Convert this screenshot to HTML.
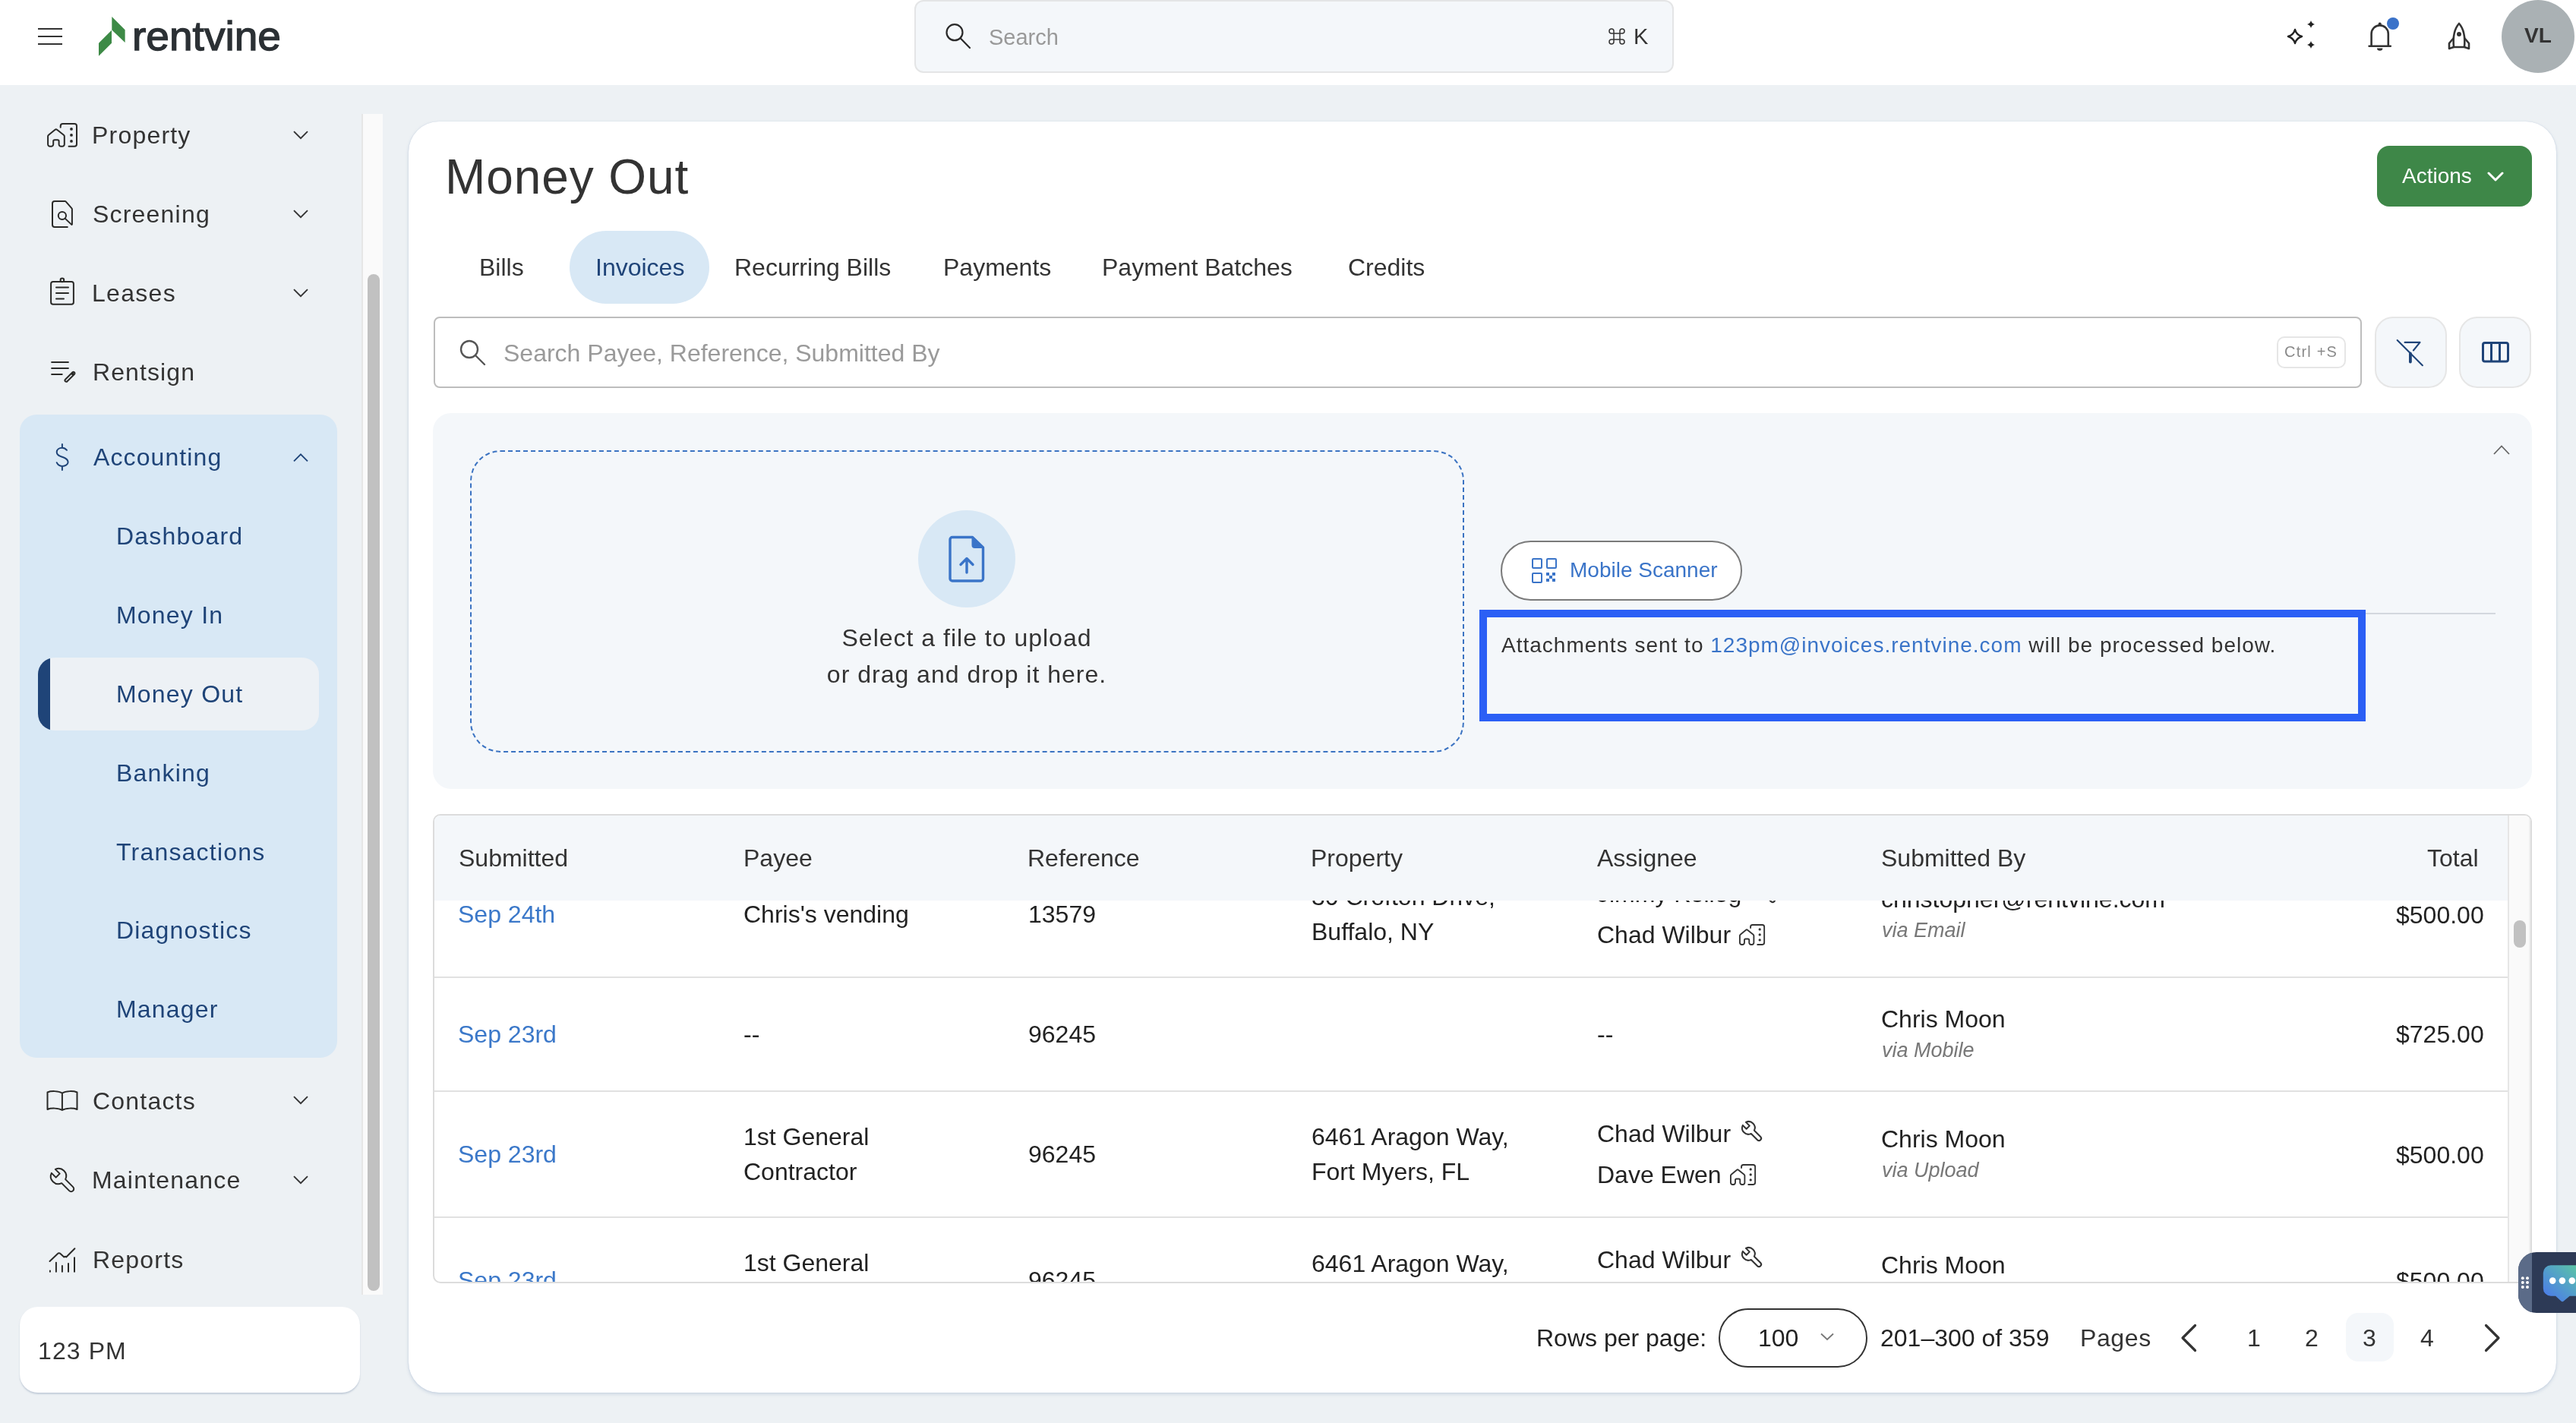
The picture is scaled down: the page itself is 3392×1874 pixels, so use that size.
<!DOCTYPE html>
<html><head><meta charset="utf-8">
<style>
*{box-sizing:border-box;margin:0;padding:0}
html,body{width:3392px;height:1874px;overflow:hidden}
body{position:relative;background:#edf1f4;font-family:"Liberation Sans",sans-serif;color:#333}
.t,svg{will-change:transform}
.a{position:absolute}
.t{position:absolute;white-space:nowrap;font-size:32px;line-height:32px}
svg{position:absolute;overflow:visible}
</style></head><body>
<!-- HEADER -->
<div class="a" style="left:0px;top:0px;width:3392px;height:112px;background:#fff"></div>
<div class="a" style="left:50px;top:37px;width:32px;height:2px;background:#333"></div>
<div class="a" style="left:50px;top:47px;width:32px;height:2px;background:#333"></div>
<div class="a" style="left:50px;top:57px;width:32px;height:2px;background:#333"></div>
<svg style="left:130px;top:22px" width="36" height="52" viewBox="0 0 36 52"><path d="M17.3 0 L34.6 17.2 L34.6 34 L17.3 17.4 Z" fill="#3d8a46"/><path d="M17 17.8 L17 34.7 L0 51.8 L0 34.7 Z" fill="#3d8a46"/></svg>
<svg style="left:177px;top:20px" width="192" height="50"><text x="-3" y="45.6" font-family="Liberation Sans" font-weight="400" font-size="53" fill="#2b3034" stroke="#2b3034" stroke-width="1.3" textLength="196" lengthAdjust="spacingAndGlyphs">rentvine</text></svg>
<div class="a" style="left:1204px;top:0px;width:1000px;height:96px;background:#f4f7fa;border:2px solid #e4e5e6;border-radius:12px"></div>
<svg style="left:1244px;top:30px" width="36" height="36" viewBox="0 0 36 36"><circle cx="13" cy="12.7" r="10.5" fill="none" stroke="#2a2a2a" stroke-width="2.2"/><path d="M20.6 20.3 L33 33" stroke="#2a2a2a" stroke-width="2.2" stroke-linecap="round"/></svg>
<div class="t" style="left:1302px;top:35.4px;font-size:29px;line-height:29px;color:#999">Search</div>
<svg style="left:2117px;top:36px" width="24" height="24" viewBox="0 0 24 24"><path d="M8 8 H16 V16 H8 Z M8 8 V5 A3 3 0 1 0 5 8 H8 M16 8 V5 A3 3 0 1 1 19 8 H16 M16 16 V19 A3 3 0 1 0 19 16 H16 M8 16 V19 A3 3 0 1 1 5 16 H8" fill="none" stroke="#333" stroke-width="1.5"/></svg>
<div class="t" style="left:2150.5px;top:33.9px;font-size:29px;line-height:29px;color:#333">K</div>
<svg style="left:3013px;top:27px" width="38" height="38" viewBox="0 0 38 38"><path d="M9 12 Q11 19 18 21 Q11 23 9 30 Q7 23 0 21 Q7 19 9 12 Z" fill="none" stroke="#222" stroke-width="2.5" stroke-linejoin="round"/><path d="M30 0 Q31 4 35 5 Q31 6 30 10 Q29 6 25 5 Q29 4 30 0 Z" fill="#222"/><path d="M30 27 Q31 31 35 32 Q31 33 30 37 Q29 33 25 32 Q29 31 30 27 Z" fill="#222"/></svg>
<svg style="left:3118px;top:29px" width="34" height="40" viewBox="0 0 34 40"><path d="M4.6 31.7 V15.5 A11.1 11.1 0 0 1 26.8 15.5 V31.7" fill="none" stroke="#333" stroke-width="2.6"/><path d="M1.6 31.7 H29.8" stroke="#333" stroke-width="2.6" stroke-linecap="round"/><circle cx="15.7" cy="2.6" r="2" fill="#333"/><path d="M12 34.5 A3.7 3.3 0 0 0 19.4 34.5 Z" fill="#333"/></svg>
<div class="a" style="left:3143px;top:23px;width:16px;height:16px;border-radius:50%;background:#3a72c9"></div>
<svg style="left:3223px;top:29px" width="30" height="38" viewBox="0 0 30 38"><path d="M15 2 Q6 12 8 33 H22 Q24 12 15 2 Z" fill="none" stroke="#333" stroke-width="2.6" stroke-linejoin="round"/><circle cx="15" cy="16" r="3" fill="#333"/><path d="M8 21 L2 28 V35 L8 33" fill="none" stroke="#333" stroke-width="2.6" stroke-linejoin="round"/><path d="M22 21 L28 28 V35 L22 33" fill="none" stroke="#333" stroke-width="2.6" stroke-linejoin="round"/></svg>
<div class="a" style="left:3294px;top:0px;width:96px;height:96px;border-radius:50%;background:#aab1b4"></div>
<div class="t" style="left:3324px;top:33.3px;font-size:28px;line-height:28px;color:#333;font-weight:700">VL</div>
<!-- SIDEBAR -->
<div class="a" style="left:476px;top:150px;width:28px;height:1555px;background:#fafafa;border-left:2px solid #e6e6e6"></div>
<div class="a" style="left:484px;top:361px;width:16px;height:1339px;background:#c1c1c1;border-radius:8px"></div>
<svg style="left:50px;top:150px" width="70" height="60" viewBox="0 0 70 60"><path d="M29.7 17.7 V16.1 A3 3 0 0 1 32.7 13.1 H48 A3 3 0 0 1 51 16.1 V39.8 A3 3 0 0 1 48 42.8 H40.5" fill="none" stroke="#2a2a28" stroke-width="2" stroke-linecap="round" stroke-linejoin="round"/><path d="M13.1 29.5 A2 2 0 0 1 14 27.8 L22.6 20.8 A2 2 0 0 1 25 20.8 L33.9 27.8 A2 2 0 0 1 34.8 29.5 V40 A2.8 2.8 0 0 1 32 42.8 H30.4 A2.8 2.8 0 0 1 27.6 40 V36 A1.8 1.8 0 0 0 25.8 34.2 H22 A1.8 1.8 0 0 0 20.2 36 V40 A2.8 2.8 0 0 1 17.4 42.8 H15.9 A2.8 2.8 0 0 1 13.1 40 Z" fill="none" stroke="#2a2a28" stroke-width="2" stroke-linecap="round" stroke-linejoin="round"/><circle cx="44" cy="19.9" r="1.9" fill="#2a2a28"/><circle cx="44" cy="27.9" r="1.9" fill="#2a2a28"/><circle cx="44" cy="35.9" r="1.9" fill="#2a2a28"/></svg>
<div class="t" style="left:121px;top:162.4px;font-size:32px;line-height:32px;letter-spacing:1.2px">Property</div>
<svg style="left:385px;top:172px" width="22" height="14" viewBox="0 0 22 14"><path d="M2 1.2 L11 10.2 L20 1.2" fill="none" stroke="#333" stroke-width="1.9"/></svg>
<svg style="left:50px;top:255px" width="70" height="60" viewBox="0 0 70 60"><path d="M38.8 43.9 H22 A3 3 0 0 1 19 40.9 V12.9 A3 3 0 0 1 22 9.9 H35.5 A1.5 1.5 0 0 1 36.6 10.4 L44.5 19.4 A1.5 1.5 0 0 1 44.9 20.4 V40.5" fill="none" stroke="#2a2a28" stroke-width="2" stroke-linecap="round" stroke-linejoin="round"/><circle cx="31.9" cy="29" r="5.1" fill="none" stroke="#2a2a28" stroke-width="2" stroke-linecap="round" stroke-linejoin="round"/><path d="M35.6 32.6 L44.3 40.9" fill="none" stroke="#2a2a28" stroke-width="2" stroke-linecap="round" stroke-linejoin="round"/></svg>
<div class="t" style="left:121.5px;top:265.9px;font-size:32px;line-height:32px;letter-spacing:1.2px">Screening</div>
<svg style="left:385px;top:276px" width="22" height="14" viewBox="0 0 22 14"><path d="M2 1.2 L11 10.2 L20 1.2" fill="none" stroke="#333" stroke-width="1.9"/></svg>
<svg style="left:50px;top:355px" width="70" height="60" viewBox="0 0 70 60"><rect x="17.1" y="16" width="29.8" height="29.8" rx="2.8" fill="none" stroke="#2a2a28" stroke-width="2" stroke-linecap="round" stroke-linejoin="round"/><circle cx="31.9" cy="13.9" r="2.3" fill="none" stroke="#2a2a28" stroke-width="2" stroke-linecap="round" stroke-linejoin="round"/><path d="M24 23.4 H40 M24 31 H40 M24 38.5 H34" fill="none" stroke="#2a2a28" stroke-width="2" stroke-linecap="round" stroke-linejoin="round"/></svg>
<div class="t" style="left:121px;top:369.9px;font-size:32px;line-height:32px;letter-spacing:1.3px">Leases</div>
<svg style="left:385px;top:380px" width="22" height="14" viewBox="0 0 22 14"><path d="M2 1.2 L11 10.2 L20 1.2" fill="none" stroke="#333" stroke-width="1.9"/></svg>
<svg style="left:50px;top:460px" width="70" height="60" viewBox="0 0 70 60"><path d="M18.1 17 H39.9 M18.1 25 H39.9 M18.1 33 H31.7" fill="none" stroke="#2a2a28" stroke-width="2" stroke-linecap="round" stroke-linejoin="round"/><path d="M36.2 39.5 L45.5 30.2 A1.6 1.6 0 0 1 47.8 30.2 L48 30.4 A1.6 1.6 0 0 1 48 32.7 L38.7 42 A2 2 0 0 1 36 42.3 A2 2 0 0 1 36.2 39.5 Z" fill="none" stroke="#2a2a28" stroke-width="2" stroke-linecap="round" stroke-linejoin="round"/><path d="M44.5 31.2 L47 33.7" stroke="#2a2a28" stroke-width="3.5"/></svg>
<div class="t" style="left:121.5px;top:473.6px;font-size:32px;line-height:32px;letter-spacing:1.1px">Rentsign</div>
<div class="a" style="left:26px;top:546px;width:418px;height:847px;background:#d8e8f5;border-radius:22px"></div>
<svg style="left:50px;top:570px" width="70" height="60" viewBox="0 0 70 60"><path d="M38 22.8 C36 20.5 33.5 19.8 31.9 19.8 C28 19.8 24.7 22 24.7 25.5 C24.7 29.5 28.5 30.5 32 31.8 C36 33.2 39.6 34.8 39.6 38.5 C39.6 41.8 36 43.9 31.9 43.9 C28.5 43.9 26 42 24.7 39.2 M31.9 15 V19.8 M31.9 43.9 V48.9" fill="none" stroke="#1f4478" stroke-width="2" stroke-linecap="round" stroke-linejoin="round"/></svg>
<div class="t" style="left:122.5px;top:586.2px;font-size:32px;line-height:32px;color:#1f4478;letter-spacing:1.1px">Accounting</div>
<svg style="left:385px;top:595px" width="22" height="14" viewBox="0 0 22 14"><path d="M2 12.3 L11 3.3 L20 12.3" fill="none" stroke="#1f4478" stroke-width="1.9"/></svg>
<div class="a" style="left:50px;top:866px;width:370px;height:96px;background:#edf1f5;border-radius:22px;overflow:hidden"><div class="a" style="left:0;top:0;width:16px;height:96px;background:#1f4478"></div></div>
<div class="t" style="left:153px;top:690.3px;font-size:32px;line-height:32px;color:#1f4478;letter-spacing:1.2px">Dashboard</div>
<div class="t" style="left:153px;top:794.1px;font-size:32px;line-height:32px;color:#1f4478;letter-spacing:1.2px">Money In</div>
<div class="t" style="left:153px;top:897.9px;font-size:32px;line-height:32px;color:#1f4478;letter-spacing:1.2px">Money Out</div>
<div class="t" style="left:153px;top:1001.7px;font-size:32px;line-height:32px;color:#1f4478;letter-spacing:1.2px">Banking</div>
<div class="t" style="left:153px;top:1105.5px;font-size:32px;line-height:32px;color:#1f4478;letter-spacing:1.2px">Transactions</div>
<div class="t" style="left:153px;top:1209.3px;font-size:32px;line-height:32px;color:#1f4478;letter-spacing:1.2px">Diagnostics</div>
<div class="t" style="left:153px;top:1313.1px;font-size:32px;line-height:32px;color:#1f4478;letter-spacing:1.2px">Manager</div>
<svg style="left:50px;top:1420px" width="70" height="60" viewBox="0 0 70 60"><path d="M31.9 19.5 C27 16.5 17 16.5 12.5 18.5 V41 C17 39 27 39 31.9 42 C36.8 39 46.8 39 51.5 41 V18.5 C46.8 16.5 36.8 16.5 31.9 19.5 Z M31.9 19.5 V42" fill="none" stroke="#2a2a28" stroke-width="2" stroke-linecap="round" stroke-linejoin="round"/></svg>
<div class="t" style="left:121.5px;top:1433.6px;font-size:32px;line-height:32px;letter-spacing:1.2px">Contacts</div>
<svg style="left:385px;top:1443px" width="22" height="14" viewBox="0 0 22 14"><path d="M2 1.2 L11 10.2 L20 1.2" fill="none" stroke="#333" stroke-width="1.9"/></svg>
<svg style="left:62px;top:1534px" width="40" height="40" viewBox="0 0 24 24"><path d="M7 10 L10 7 L6.5 3.5 a6 6 0 0 1 8 8 l6 6 a2 2 0 0 1 -3 3 l-6 -6 a6 6 0 0 1 -8 -8 Z" fill="none" stroke="#2a2a28" stroke-width="1.2" stroke-linecap="round" stroke-linejoin="round"/></svg>
<div class="t" style="left:121px;top:1538.1px;font-size:32px;line-height:32px;letter-spacing:1.2px">Maintenance</div>
<svg style="left:385px;top:1548px" width="22" height="14" viewBox="0 0 22 14"><path d="M2 1.2 L11 10.2 L20 1.2" fill="none" stroke="#333" stroke-width="1.9"/></svg>
<svg style="left:50px;top:1520px" width="70" height="170" viewBox="0 0 70 170"><path d="M15.5 141 L26.3 130.8 A2 2 0 0 1 29.2 130.8 L34.4 135.5 A2 2 0 0 1 37.2 135.5 L48.4 124.3" fill="none" stroke="#2a2a28" stroke-width="2" stroke-linecap="round" stroke-linejoin="round"/><path d="M15.9 153.5 V154.7 M23.9 142.8 V154.7 M31.9 147 V154.7 M40 144 V154.7 M48 136.2 V154.7" fill="none" stroke="#2a2a28" stroke-width="2" stroke-linecap="round" stroke-linejoin="round"/></svg>
<div class="t" style="left:121.5px;top:1642.9px;font-size:32px;line-height:32px;letter-spacing:1.2px">Reports</div>
<div class="a" style="left:26px;top:1721px;width:448px;height:113px;background:#fff;border-radius:24px;box-shadow:0 2px 2px rgba(120,140,170,0.35)"></div>
<div class="t" style="left:50px;top:1762.9px;font-size:32px;line-height:32px;letter-spacing:1.1px">123 PM</div>
<!-- MAIN CARD -->
<div class="a" style="left:538px;top:160px;width:2828px;height:1674px;background:#fff;border-radius:40px;box-shadow:0 2px 4px rgba(110,140,180,0.28), 0 0 1px rgba(150,170,200,0.5)"></div>
<div class="t" style="left:586px;top:200.8px;font-size:64px;line-height:64px;color:#333;letter-spacing:0.9px">Money Out</div>
<div class="a" style="left:3130px;top:192px;width:204px;height:80px;background:#3e8748;border-radius:16px"></div>
<div class="t" style="left:3163px;top:218.3px;font-size:28px;line-height:28px;color:#fff">Actions</div>
<svg style="left:3275px;top:226px" width="22" height="14" viewBox="0 0 22 14"><path d="M2 2 L11 11 L20 2" fill="none" stroke="#fff" stroke-width="3" stroke-linecap="round" stroke-linejoin="round"/></svg>
<div class="a" style="left:750px;top:304px;width:184px;height:96px;background:#d8e8f5;border-radius:48px"></div>
<div class="t" style="left:631px;top:336.4px;font-size:32px;line-height:32px">Bills</div>
<div class="t" style="left:784px;top:336.4px;font-size:32px;line-height:32px;color:#1f4478">Invoices</div>
<div class="t" style="left:967px;top:336.4px;font-size:32px;line-height:32px">Recurring Bills</div>
<div class="t" style="left:1242px;top:336.4px;font-size:32px;line-height:32px">Payments</div>
<div class="t" style="left:1451px;top:336.4px;font-size:32px;line-height:32px">Payment Batches</div>
<div class="t" style="left:1775px;top:336.4px;font-size:32px;line-height:32px">Credits</div>
<div class="a" style="left:571px;top:417px;width:2539px;height:94px;border:2px solid #bdbdbd;border-radius:8px;background:#fff"></div>
<svg style="left:604px;top:446px" width="36" height="36" viewBox="0 0 36 36"><circle cx="14" cy="14" r="11" fill="none" stroke="#555" stroke-width="2.4"/><path d="M22 22 L34 34" stroke="#555" stroke-width="2.4" stroke-linecap="round"/></svg>
<div class="t" style="left:663px;top:448.9px;font-size:32px;line-height:32px;color:#9a9a9a">Search Payee, Reference, Submitted By</div>
<div class="a" style="left:2998px;top:443px;width:91px;height:42px;border:2px solid #e6e6e6;border-radius:10px;background:#fff"></div>
<div class="t" style="left:3008px;top:453.1px;font-size:20px;line-height:20px;color:#8a8a8a;letter-spacing:1.2px">Ctrl +S</div>
<div class="a" style="left:3127px;top:417px;width:95px;height:94px;background:#f4f7fa;border:2px solid #e6e6e6;border-radius:24px"></div>
<div class="a" style="left:3238px;top:417px;width:95px;height:94px;background:#f4f7fa;border:2px solid #e6e6e6;border-radius:24px"></div>
<svg style="left:3140px;top:430px" width="70" height="70" viewBox="0 0 70 70"><path d="M16.7 18 L49.9 51.2" stroke="#1f4478" stroke-width="2.1" stroke-linecap="round"/><path d="M26.6 20.9 H46.5 L37.9 31.5" fill="none" stroke="#1f4478" stroke-width="2.1" stroke-linecap="round" stroke-linejoin="round"/><path d="M33.9 35.5 V46.5" stroke="#1f4478" stroke-width="3.8" stroke-linecap="round"/></svg>
<svg style="left:3266px;top:448px" width="40" height="34" viewBox="0 0 40 34"><rect x="3.5" y="3.5" width="33" height="24.5" rx="2.5" fill="none" stroke="#1f4478" stroke-width="3"/><path d="M14.5 3.5 V28 M25.5 3.5 V28" stroke="#1f4478" stroke-width="3"/></svg>
<!-- UPLOAD -->
<div class="a" style="left:570px;top:544px;width:2764px;height:495px;background:#f4f7fa;border-radius:24px"></div>
<div class="a" style="left:619px;top:593px;width:1309px;height:398px;border:2px dashed #3b73c2;border-radius:40px"></div>
<div class="a" style="left:1209px;top:672px;width:128px;height:128px;border-radius:50%;background:#d8e8f5"></div>
<svg style="left:1248px;top:704px" width="50" height="64" viewBox="0 0 50 64"><path d="M6 3.5 H32.5 L46.5 17 V58 A3 3 0 0 1 43.5 61 H6 A3 3 0 0 1 3 58 V6.5 A3 3 0 0 1 6 3.5 Z" fill="none" stroke="#3a74c8" stroke-width="3.4" stroke-linejoin="round"/><path d="M32.5 3.5 V14 A3 3 0 0 0 35.5 17 H46.5 Z" fill="#3a74c8" stroke="#3a74c8" stroke-width="2" stroke-linejoin="round"/><path d="M25 50 V32 M17 39.5 L25 31.5 L33 39.5" fill="none" stroke="#3a74c8" stroke-width="3.4" stroke-linecap="round" stroke-linejoin="round"/></svg>
<div class="t" style="left:1000px;width:546px;top:816px;text-align:center;font-size:32px;line-height:48px;letter-spacing:1px;color:#333;white-space:normal">Select a file to upload<br>or drag and drop it here.</div>
<svg style="left:3282px;top:584px" width="24" height="16" viewBox="0 0 24 16"><path d="M2 14 L12 3.5 L22 14" fill="none" stroke="#666" stroke-width="1.8"/></svg>
<div class="a" style="left:1976px;top:712px;width:318px;height:79px;border:2px solid #7a7a7a;border-radius:40px;background:#fff"></div>
<svg style="left:2016px;top:734px" width="36" height="36" viewBox="0 0 36 36"><rect x="2" y="2" width="12" height="12" rx="1" fill="none" stroke="#3a74c8" stroke-width="2"/><rect x="21" y="2" width="12" height="12" rx="1" fill="none" stroke="#3a74c8" stroke-width="2"/><rect x="2" y="21" width="12" height="12" rx="1" fill="none" stroke="#3a74c8" stroke-width="2"/><path d="M20 20 h4 v4 h-4 z M28 20 h4 v4 h-4 z M24 24 h4 v4 h-4 z M20 28 h4 v4 h-4 z M28 28 h4 v4 h-4 z" fill="#3a74c8"/></svg>
<div class="t" style="left:2067px;top:736.8px;font-size:28px;line-height:28px;color:#3a74c8">Mobile Scanner</div>
<div class="a" style="left:1960px;top:807px;width:1326px;height:2px;background:#d3d8de"></div>
<div class="a" style="left:1948px;top:803px;width:1167px;height:147px;border:10px solid #2b5ff5"></div>
<div class="t" style="left:1977px;top:835.6px;font-size:28px;line-height:28px;color:#333;letter-spacing:1px">Attachments sent to <span style="color:#3a74c8">123pm@invoices.rentvine.com</span> will be processed below.</div>
<!-- TABLE -->
<div class="a" style="left:570px;top:1072px;width:2764px;height:618px;border:2px solid #dcdcdc;border-radius:10px;background:#fff;overflow:hidden">
<div class="a" style="left:0px;top:0px;width:2730px;height:112px;background:#f4f7fa"></div>
<div class="a" style="left:2730px;top:0px;width:30px;height:616px;background:#fafafa;border-left:2px solid #e6e6e6;border-right:2px solid #efefef"></div>
<div class="a" style="left:2738px;top:138px;width:16px;height:36px;background:#c1c1c1;border-radius:8px"></div>
</div>
<div class="t" style="left:604px;top:1113.9px;font-size:32px;line-height:32px;color:#333">Submitted</div>
<div class="t" style="left:979px;top:1113.9px;font-size:32px;line-height:32px;color:#333">Payee</div>
<div class="t" style="left:1353px;top:1113.9px;font-size:32px;line-height:32px;color:#333">Reference</div>
<div class="t" style="left:1726px;top:1113.9px;font-size:32px;line-height:32px;color:#333">Property</div>
<div class="t" style="left:2103px;top:1113.9px;font-size:32px;line-height:32px;color:#333">Assignee</div>
<div class="t" style="left:2477px;top:1113.9px;font-size:32px;line-height:32px;color:#333">Submitted By</div>
<div class="t" style="right:128px;top:1113.9px;font-size:32px;line-height:32px;color:#333">Total</div>
<div class="a" style="left:572px;top:1186px;width:2730px;height:502px;overflow:hidden">
<div class="a" style="left:0px;top:100px;width:2730px;height:2px;background:#e1e1e1"></div>
<div class="a" style="left:0px;top:250px;width:2730px;height:2px;background:#e1e1e1"></div>
<div class="a" style="left:0px;top:416px;width:2730px;height:2px;background:#e1e1e1"></div>
<div class="t" style="left:31px;top:1.9px;font-size:32px;line-height:32px;color:#3b78c9">Sep 24th</div>
<div class="t" style="left:407px;top:1.9px;font-size:32px;line-height:32px;color:#222">Chris's vending</div>
<div class="t" style="left:782px;top:1.9px;font-size:32px;line-height:32px;color:#222">13579</div>
<div class="t" style="left:1155px;top:-21.1px;font-size:32px;line-height:32px;color:#222">30 Crofton Drive,</div>
<div class="t" style="left:1155px;top:24.9px;font-size:32px;line-height:32px;color:#222">Buffalo, NY</div>
<div class="t" style="left:1531px;top:-25.1px;font-size:32px;line-height:32px;color:#222">Jimmy Kellog</div>
<svg style="left:1735.5px;top:-27.5px" width="33" height="33" viewBox="0 0 24 24"><path d="M7 10 L10 7 L6.5 3.5 a6 6 0 0 1 8 8 l6 6 a2 2 0 0 1 -3 3 l-6 -6 a6 6 0 0 1 -8 -8 Z" fill="none" stroke="#333" stroke-width="1.5" stroke-linecap="round" stroke-linejoin="round"/></svg>
<div class="t" style="left:1531px;top:28.5px;font-size:32px;line-height:32px;color:#222">Chad Wilbur</div>
<svg style="left:1718px;top:31px" width="34" height="28" viewBox="12 12 40 32" preserveAspectRatio="none"><path d="M29.7 17.7 V16.1 A3 3 0 0 1 32.7 13.1 H48 A3 3 0 0 1 51 16.1 V39.8 A3 3 0 0 1 48 42.8 H40.5" fill="none" stroke="#333" stroke-width="2.2" stroke-linecap="round" stroke-linejoin="round"/><path d="M13.1 29.5 A2 2 0 0 1 14 27.8 L22.6 20.8 A2 2 0 0 1 25 20.8 L33.9 27.8 A2 2 0 0 1 34.8 29.5 V40 A2.8 2.8 0 0 1 32 42.8 H30.4 A2.8 2.8 0 0 1 27.6 40 V36 A1.8 1.8 0 0 0 25.8 34.2 H22 A1.8 1.8 0 0 0 20.2 36 V40 A2.8 2.8 0 0 1 17.4 42.8 H15.9 A2.8 2.8 0 0 1 13.1 40 Z" fill="none" stroke="#333" stroke-width="2.2" stroke-linecap="round" stroke-linejoin="round"/><circle cx="44" cy="19.9" r="1.9" fill="#333"/><circle cx="44" cy="27.9" r="1.9" fill="#333"/><circle cx="44" cy="35.9" r="1.9" fill="#333"/></svg>
<div class="t" style="left:1905px;top:-18.1px;font-size:32px;line-height:32px;color:#222">christopher@rentvine.com</div>
<div class="t" style="left:1906px;top:25.6px;font-size:27px;line-height:27px;color:#777;font-style:italic">via Email</div>
<div class="t" style="right:31px;top:2.9px;font-size:32px;line-height:32px;color:#222">$500.00</div>
<div class="t" style="left:31px;top:159.9px;font-size:32px;line-height:32px;color:#3b78c9">Sep 23rd</div>
<div class="t" style="left:407px;top:159.9px;font-size:32px;line-height:32px;color:#222">--</div>
<div class="t" style="left:782px;top:159.9px;font-size:32px;line-height:32px;color:#222">96245</div>
<div class="t" style="left:1531px;top:159.9px;font-size:32px;line-height:32px;color:#222">--</div>
<div class="t" style="left:1905px;top:140.3px;font-size:32px;line-height:32px;color:#222">Chris Moon</div>
<div class="t" style="left:1906px;top:184.1px;font-size:27px;line-height:27px;color:#777;font-style:italic">via Mobile</div>
<div class="t" style="right:31px;top:159.9px;font-size:32px;line-height:32px;color:#222">$725.00</div>
<div class="t" style="left:31px;top:317.9px;font-size:32px;line-height:32px;color:#3b78c9">Sep 23rd</div>
<div class="t" style="left:407px;top:295.4px;font-size:32px;line-height:32px;color:#222">1st General</div>
<div class="t" style="left:407px;top:340.9px;font-size:32px;line-height:32px;color:#222">Contractor</div>
<div class="t" style="left:782px;top:317.9px;font-size:32px;line-height:32px;color:#222">96245</div>
<div class="t" style="left:1155px;top:295.3px;font-size:32px;line-height:32px;color:#222">6461 Aragon Way,</div>
<div class="t" style="left:1155px;top:340.9px;font-size:32px;line-height:32px;color:#222">Fort Myers, FL</div>
<div class="t" style="left:1531px;top:290.5px;font-size:32px;line-height:32px;color:#222">Chad Wilbur</div>
<svg style="left:1717.5px;top:286.5px" width="33" height="33" viewBox="0 0 24 24"><path d="M7 10 L10 7 L6.5 3.5 a6 6 0 0 1 8 8 l6 6 a2 2 0 0 1 -3 3 l-6 -6 a6 6 0 0 1 -8 -8 Z" fill="none" stroke="#333" stroke-width="1.5" stroke-linecap="round" stroke-linejoin="round"/></svg>
<div class="t" style="left:1531px;top:344.5px;font-size:32px;line-height:32px;color:#222">Dave Ewen</div>
<svg style="left:1706px;top:347px" width="34" height="28" viewBox="12 12 40 32" preserveAspectRatio="none"><path d="M29.7 17.7 V16.1 A3 3 0 0 1 32.7 13.1 H48 A3 3 0 0 1 51 16.1 V39.8 A3 3 0 0 1 48 42.8 H40.5" fill="none" stroke="#333" stroke-width="2.2" stroke-linecap="round" stroke-linejoin="round"/><path d="M13.1 29.5 A2 2 0 0 1 14 27.8 L22.6 20.8 A2 2 0 0 1 25 20.8 L33.9 27.8 A2 2 0 0 1 34.8 29.5 V40 A2.8 2.8 0 0 1 32 42.8 H30.4 A2.8 2.8 0 0 1 27.6 40 V36 A1.8 1.8 0 0 0 25.8 34.2 H22 A1.8 1.8 0 0 0 20.2 36 V40 A2.8 2.8 0 0 1 17.4 42.8 H15.9 A2.8 2.8 0 0 1 13.1 40 Z" fill="none" stroke="#333" stroke-width="2.2" stroke-linecap="round" stroke-linejoin="round"/><circle cx="44" cy="19.9" r="1.9" fill="#333"/><circle cx="44" cy="27.9" r="1.9" fill="#333"/><circle cx="44" cy="35.9" r="1.9" fill="#333"/></svg>
<div class="t" style="left:1905px;top:297.9px;font-size:32px;line-height:32px;color:#222">Chris Moon</div>
<div class="t" style="left:1906px;top:342.1px;font-size:27px;line-height:27px;color:#777;font-style:italic">via Upload</div>
<div class="t" style="right:31px;top:318.9px;font-size:32px;line-height:32px;color:#222">$500.00</div>
<div class="t" style="left:31px;top:483.9px;font-size:32px;line-height:32px;color:#3b78c9">Sep 23rd</div>
<div class="t" style="left:407px;top:460.9px;font-size:32px;line-height:32px;color:#222">1st General</div>
<div class="t" style="left:407px;top:505.9px;font-size:32px;line-height:32px;color:#222">Contractor</div>
<div class="t" style="left:782px;top:483.9px;font-size:32px;line-height:32px;color:#222">96245</div>
<div class="t" style="left:1155px;top:461.9px;font-size:32px;line-height:32px;color:#222">6461 Aragon Way,</div>
<div class="t" style="left:1155px;top:506.9px;font-size:32px;line-height:32px;color:#222">Fort Myers, FL</div>
<div class="t" style="left:1531px;top:456.9px;font-size:32px;line-height:32px;color:#222">Chad Wilbur</div>
<svg style="left:1717.5px;top:452.5px" width="33" height="33" viewBox="0 0 24 24"><path d="M7 10 L10 7 L6.5 3.5 a6 6 0 0 1 8 8 l6 6 a2 2 0 0 1 -3 3 l-6 -6 a6 6 0 0 1 -8 -8 Z" fill="none" stroke="#333" stroke-width="1.5" stroke-linecap="round" stroke-linejoin="round"/></svg>
<div class="t" style="left:1531px;top:510.9px;font-size:32px;line-height:32px;color:#222">Dave Ewen</div>
<div class="t" style="left:1905px;top:464.4px;font-size:32px;line-height:32px;color:#222">Chris Moon</div>
<div class="t" style="right:31px;top:484.9px;font-size:32px;line-height:32px;color:#222">$500.00</div>
</div>
<!-- PAGINATION -->
<div class="t" style="left:2023px;top:1746.2px;font-size:32px;line-height:32px;color:#222">Rows per page:</div>
<div class="a" style="left:2263px;top:1723px;width:196px;height:78px;border:2px solid #333;border-radius:40px"></div>
<div class="t" style="left:2315px;top:1746.2px;font-size:32px;line-height:32px;color:#222">100</div>
<svg style="left:2396px;top:1754px" width="20" height="12" viewBox="0 0 20 12"><path d="M2 2.5 L10 10 L18 2.5" fill="none" stroke="#777" stroke-width="1.8"/></svg>
<div class="t" style="left:2476px;top:1746.2px;font-size:32px;line-height:32px;color:#222">201–300 of 359</div>
<div class="t" style="left:2739px;top:1746.2px;font-size:32px;line-height:32px;letter-spacing:0.6px">Pages</div>
<svg style="left:2867px;top:1742px" width="30" height="40" viewBox="0 0 30 40"><path d="M23.5 3.5 L7 20 L23.5 36.5" fill="none" stroke="#333" stroke-width="3.2" stroke-linecap="round" stroke-linejoin="round"/></svg>
<div class="a" style="left:3089px;top:1729px;width:63px;height:64px;background:#f4f7fa;border-radius:16px"></div>
<div class="t" style="left:2959px;top:1746.2px;font-size:32px;line-height:32px">1</div>
<div class="t" style="left:3035px;top:1746.2px;font-size:32px;line-height:32px">2</div>
<div class="t" style="left:3111px;top:1746.2px;font-size:32px;line-height:32px">3</div>
<div class="t" style="left:3187px;top:1746.2px;font-size:32px;line-height:32px">4</div>
<svg style="left:3266px;top:1742px" width="30" height="40" viewBox="0 0 30 40"><path d="M7.5 3.5 L24 20 L7.5 36.5" fill="none" stroke="#333" stroke-width="3.2" stroke-linecap="round" stroke-linejoin="round"/></svg>
<div class="a" style="left:3316px;top:1649px;width:76px;height:80px;background:#2d3a56;border-radius:24px 0 0 24px;overflow:hidden"><div class="a" style="left:0;top:0;width:18px;height:80px;background:#5b6b88"></div></div>
<svg style="left:3316px;top:1649px" width="76" height="80" viewBox="0 0 76 80"><g fill="#fff"><circle cx="5.8" cy="34.2" r="2"/><circle cx="12" cy="34.2" r="2"/><circle cx="5.8" cy="40.1" r="2"/><circle cx="12" cy="40.1" r="2"/><circle cx="5.8" cy="46" r="2"/><circle cx="12" cy="46" r="2"/></g><defs><linearGradient id="cg" x1="0" y1="0.9" x2="1" y2="0.1"><stop offset="0" stop-color="#4b78ec"/><stop offset="0.55" stop-color="#55aac0"/><stop offset="1" stop-color="#5ed394"/></linearGradient></defs><path d="M42.8 17.3 H100 V57.8 H67.7 L60 64.3 A2.6 2.6 0 0 1 56.2 64.3 L49.1 57.8 H42.8 A10 10 0 0 1 32.8 47.8 V27.3 A10 10 0 0 1 42.8 17.3 Z" fill="url(#cg)"/><g fill="#fff"><circle cx="45.2" cy="37.6" r="4.3"/><circle cx="57.9" cy="37.6" r="4.3"/><circle cx="70.8" cy="37.6" r="4.3"/></g></svg>
</body></html>
